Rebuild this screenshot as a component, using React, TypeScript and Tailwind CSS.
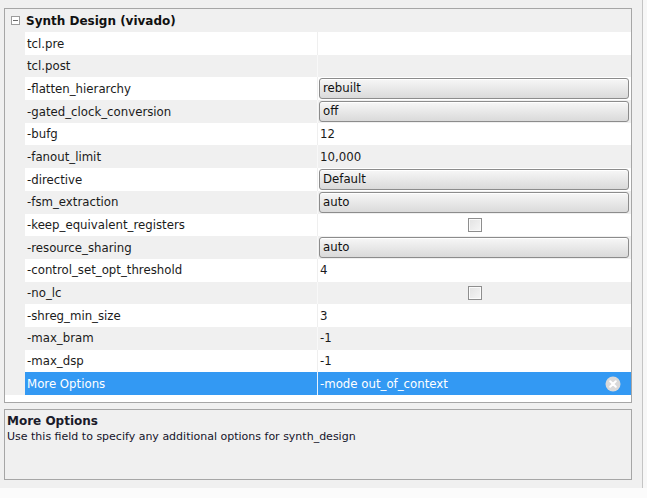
import React from 'react';

type Row = {
  label: string;
  kind: 'text' | 'select' | 'check' | 'empty';
  value?: string;
  selected?: boolean;
};

const rows: Row[] = [
  { label: 'tcl.pre', kind: 'empty' },
  { label: 'tcl.post', kind: 'empty' },
  { label: '-flatten_hierarchy', kind: 'select', value: 'rebuilt' },
  { label: '-gated_clock_conversion', kind: 'select', value: 'off' },
  { label: '-bufg', kind: 'text', value: '12' },
  { label: '-fanout_limit', kind: 'text', value: '10,000' },
  { label: '-directive', kind: 'select', value: 'Default' },
  { label: '-fsm_extraction', kind: 'select', value: 'auto' },
  { label: '-keep_equivalent_registers', kind: 'check' },
  { label: '-resource_sharing', kind: 'select', value: 'auto' },
  { label: '-control_set_opt_threshold', kind: 'text', value: '4' },
  { label: '-no_lc', kind: 'check' },
  { label: '-shreg_min_size', kind: 'text', value: '3' },
  { label: '-max_bram', kind: 'text', value: '-1' },
  { label: '-max_dsp', kind: 'text', value: '-1' },
  { label: 'More Options', kind: 'text', value: '-mode out_of_context', selected: true },
];

const ClearIcon = () => (
  <svg width="16" height="16" viewBox="0 0 16 16" className="shrink-0">
    <circle cx="8" cy="8" r="7.5" fill="#d9d9d9" />
    <path d="M5.2 5.2l5.6 5.6M10.8 5.2l-5.6 5.6" stroke="#ffffff" strokeWidth="2" strokeLinecap="round" />
  </svg>
);

const Value = ({ row }: { row: Row }) => {
  if (row.kind === 'select') {
    return (
      <div className="h-full py-[1px] pl-[1px] pr-[2px]">
        <div className="h-full flex items-center pl-[3px] pt-px rounded-[3px] border border-[#8c8c8c] bg-gradient-to-b from-[#f7f7f7] to-[#dadada] shadow-[inset_0_1px_0_#ffffff] text-[#111]">
          {row.value}
        </div>
      </div>
    );
  }
  if (row.kind === 'check') {
    return (
      <div className="h-full flex items-center justify-center">
        <div className="w-[14px] h-[14px] border border-[#8e8e8e] bg-gradient-to-br from-[#e2e2e2] to-[#f6f6f6] shadow-[inset_0_0_0_1px_#fbfbfb]" />
      </div>
    );
  }
  return (
    <div className="h-full flex items-center pl-[2px] pr-[10px]">
      <span className="flex-1 pt-[2px]">{row.value}</span>
      {row.selected && <ClearIcon />}
    </div>
  );
};

export default function App() {
  return (
    <div
      className="w-[647px] h-[498px] bg-[#f0f0f0] overflow-hidden flex flex-col text-[11.75px] text-[#1b1b1b]"
      style={{ fontFamily: '"DejaVu Sans", Verdana, sans-serif' }}
    >
      <div className="flex h-[488px]">
        <div className="ml-[4px] mt-[8px] w-[628px] flex flex-col">
          <div className="h-[395px] border border-[#a6a6a6] bg-white flex flex-col">
            <div className="h-[23px] bg-[#f0f0f0] flex items-center shrink-0">
              <div className="ml-[6px] w-[9px] h-[9px] border border-[#9c9c9c] bg-white flex items-center justify-center">
                <div className="w-[5px] h-px bg-[#6a6a6a]" />
              </div>
              <span className="ml-[6px] font-bold text-[12px] text-[#111]">Synth Design (vivado)</span>
            </div>
            {rows.map((row, i) => {
              const white = i % 2 === 0;
              const sel = row.selected;
              const cell = sel ? 'bg-[#3399f3] text-white' : white ? 'bg-white' : 'bg-[#f0f0f0]';
              return (
                <div key={row.label} className="h-[22.7px] flex bg-[#f0f0f0] shrink-0">
                  <div className="w-[20px]" />
                  <div className={`w-[292px] flex items-center pl-[2px] pt-[2px] ${cell}`}>{row.label}</div>
                  <div className={`w-px ${sel ? 'bg-[#e8f2fd]' : white ? 'bg-[#efefef]' : 'bg-[#f8f8f8]'}`} />
                  <div className={`flex-1 ${cell}`}>
                    <Value row={row} />
                  </div>
                </div>
              );
            })}
          </div>
          <div className="mt-[6px] h-[71px] border border-[#a6a6a6] bg-[#f0f0f0] px-[2px] pt-[3px] leading-[16px]">
            <div className="font-bold text-[12px] text-[#1a1a2a]">More Options</div>
            <div className="text-[11px] text-[#14142a]">Use this field to specify any additional options for synth_design</div>
          </div>
        </div>
        <div className="ml-[10px] w-px h-full bg-[#c4c4c4]" />
        <div className="flex-1 bg-[#f7f7f7]" />
      </div>
      <div className="flex-1 bg-[#fbfbfb]" />
    </div>
  );
}
